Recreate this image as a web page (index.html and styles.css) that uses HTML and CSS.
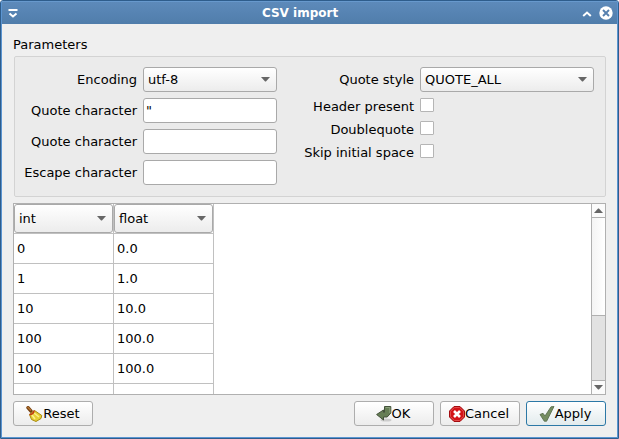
FILE: index.html
```html
<!DOCTYPE html>
<html lang="en">
<head>
<meta charset="utf-8">
<title>CSV import</title>
<link rel="stylesheet" href="styles.css">
</head>
<body>
<div class="window">
  <header class="titlebar">
    <svg class="menu-icon" width="10" height="10" viewBox="0 0 10 10"><path d="M.5 2h9" stroke="#fff" stroke-width="2"/><path d="M1.500 5.500 5 8.500l3.500-3" fill="none" stroke="#fff" stroke-width="2"/></svg>
    <h1>CSV import</h1>
    <svg class="shade-icon" width="10" height="6" viewBox="0 0 10 6"><path d="M1.200 5 5 1.500 8.800 5" fill="none" stroke="#fff" stroke-width="2"/></svg>
    <svg class="close-icon" width="14" height="14" viewBox="0 0 14 14"><circle cx="7" cy="7" r="6.700" fill="#fff"/><path d="m4 4 6 6m0-6-6 6" stroke="#5680af" stroke-width="1.900"/></svg>
  </header>
  <main class="content">
    <div class="group-title">Parameters</div>
    <section class="params">
      <div class="fields">
        <label>Encoding</label><div class="combo">utf-8<i class="arrow"></i></div>
        <label>Quote character</label><div class="input">"</div>
        <label>Quote character</label><div class="input"></div>
        <label>Escape character</label><div class="input"></div>
      </div>
      <div class="options">
        <label>Quote style</label><div class="combo">QUOTE_ALL<i class="arrow"></i></div>
        <label>Header present</label><span class="check"></span>
        <label>Doublequote</label><span class="check"></span>
        <label>Skip initial space</label><span class="check"></span>
      </div>
    </section>
    <section class="preview">
      <div class="grid">
        <div class="head"><div class="combo">int<i class="arrow"></i></div></div><div class="head"><div class="combo">float<i class="arrow"></i></div></div>
        <div class="cell">0</div><div class="cell">0.0</div>
        <div class="cell">1</div><div class="cell">1.0</div>
        <div class="cell">10</div><div class="cell">10.0</div>
        <div class="cell">100</div><div class="cell">100.0</div>
        <div class="cell">100</div><div class="cell">100.0</div>
        <div class="cell"></div><div class="cell"></div>
      </div>
      <div class="scrollbar">
        <div class="step"><i class="arrow up"></i></div>
        <div class="thumb"></div>
        <div class="track"></div>
        <div class="step"><i class="arrow"></i></div>
      </div>
    </section>
    <footer class="actions">
      <div class="button reset"><svg width="17" height="16" viewBox="0 0 17 16"><path d="m2 1.700 3 3.500" stroke="#76400f" stroke-width="3.400" stroke-linecap="round"/><path d="m1.500 1 3.500 3.500" stroke="#b87835" stroke-width="1.200"/><path d="M8.500 4.500 15.800 9.500 15 12.500l-5 3-4.500-2-2-5z" fill="#e6cf35" stroke="#a88a10"/><path d="m6 9 3 4m-1-6 5 4" stroke="#fff08a" stroke-width="1.500"/><path d="M3.500 8.500c2.500 0 4.200-1.500 4.500-4" fill="none" stroke="#c23b16" stroke-width="1.700"/></svg>Reset</div>
      <div class="spacer"></div>
      <div class="button"><svg width="16" height="16" viewBox="0 0 16 16"><ellipse cx="10" cy="14" rx="5.500" ry="1.500" fill="#ccc"/><path d="M8.500.5h6.300v6.500l-3.600 4H7.500v3L.6 8.500 7.500 4V6.500h1z" fill="#667e55" stroke="#43513a"/><path d="M9.500 1.500h4.300V7" fill="none" stroke="#8ba17c"/></svg>OK</div>
      <div class="button"><svg width="16" height="16" viewBox="0 0 16 16"><path d="M5 .5h6L15.500 5v6L11 15.500H5L.5 11V5z" fill="#d31318" stroke="#a30c10"/><path d="M5.400 1.500h5.200l3.900 3.900v5.200l-3.900 3.900H5.400l-3.900-3.900V5.400z" fill="none" stroke="#e04a4a"/><path d="m5 5 6 6m0-6-6 6" stroke="#fff" stroke-width="2.600"/></svg>Cancel</div>
      <div class="button default"><svg width="16" height="16" viewBox="0 0 16 16"><path d="m1 8.500 3-1.200 2 2.700L12 .8l3-.3-7.400 14.700H5.300z" fill="#758e61" stroke="#5c7050" stroke-width=".9" stroke-linejoin="round"/></svg>Apply</div>
    </footer>
  </main>
</div>
</body>
</html>
```
FILE: styles.css
```css
* { box-sizing: border-box; }
body {
  margin: 0;
  font: 13px/15px "DejaVu Sans", sans-serif;
  color: #000;
  background: #fff;
}
.window {
  width: 619px;
  height: 439px;
  border: 1px solid #2e5d8c;
  border-radius: 3px 3px 0 0;
  box-shadow: inset 0 0 0 1px #5b95d2;
  background: #efefef;
  overflow: hidden;
}
.titlebar {
  display: flex;
  align-items: center;
  height: 23px;
  padding: 1px 4px 0 6px;
  color: #fff;
  background: linear-gradient(#6799cd 0 1px, #5d8aba 1px, #507dab);
  border-inline: 1px solid #5b95d2;
}
.titlebar h1 {
  flex: 1;
  margin: 1px 0 0;
  font-size: 12px;
  text-align: center;
}
.menu-icon { margin-bottom: 1px; }
.shade-icon { margin: 1px 7px 0 0; }
.content { padding: 13px 12px 0; }
.group-title { height: 19px; }
.params {
  display: flex;
  gap: 26px;
  height: 141px;
  margin-left: 1px;
  padding: 10px 0 0 9px;
  border: 1px solid #d3d3d3;
  border-radius: 2px;
  background: #ebebeb;
}
.fields, .options {
  display: grid;
  column-gap: 6px;
  align-content: start;
}
.fields {
  grid-template-columns: 113px 134px;
  grid-auto-rows: 25px;
  row-gap: 6px;
}
.options {
  grid-template-columns: 111px 174px;
  grid-template-rows: 25px 17px 17px 17px;
  row-gap: 6px;
}
label {
  text-align: right;
  white-space: nowrap;
  align-self: center;
}
.combo {
  display: flex;
  align-items: center;
  justify-content: space-between;
  padding: 0 6px 0 4px;
  border: 1px solid #a9a9a9;
  border-radius: 3px;
  background: linear-gradient(#fff, #ececec);
}
.arrow {
  width: 9px;
  height: 5px;
  background: #666;
  clip-path: polygon(0 0, 100% 0, 55% 90%, 45% 90%);
}
.arrow.up { clip-path: polygon(0 100%, 100% 100%, 55% 10%, 45% 10%); }
.input {
  padding: 4px 2px;
  border: 1px solid #a9a9a9;
  border-radius: 3px;
  background: #fff;
}
.check {
  width: 14px;
  height: 14px;
  border: 1px solid #b5b5b5;
  border-radius: 1px;
  background: #fff;
}
.preview {
  display: flex;
  justify-content: space-between;
  height: 192px;
  margin-top: 6px;
  border: 1px solid #b0b0b0;
  background: #fff;
  overflow: hidden;
}
.grid {
  display: grid;
  grid-template-columns: 100px 100px;
  grid-auto-rows: 30px;
}
.cell, .head {
  border-right: 1px solid #c0c0c0;
  border-bottom: 1px solid #c0c0c0;
}
.cell { padding: 7px 3px; }
.head .combo { height: 29px; }
.scrollbar {
  display: flex;
  flex-direction: column;
  width: 14px;
  border-left: 1px solid #b0b0b0;
}
.step {
  display: grid;
  place-items: center;
  height: 13px;
  background: #fbfbfb;
}
.thumb {
  height: 99px;
  border: solid #b0b0b0;
  border-width: 1px 0;
  background: linear-gradient(90deg, #f4f4f4, #fff);
}
.track {
  flex: 1;
  background: #e2e2e2;
  border-bottom: 1px solid #b0b0b0;
}
.actions {
  display: flex;
  gap: 6px;
  margin-top: 6px;
}
.spacer { flex: 1; }
.button {
  display: flex;
  align-items: center;
  justify-content: center;
  width: 80px;
  height: 25px;
  padding-right: 2px;
  border: 1px solid #adadad;
  border-radius: 3px;
  background: linear-gradient(#fff, #ececec);
}
.button.reset { padding-right: 0; }
.default {
  border-color: #2c78a6;
  background: linear-gradient(#fff, #e2ebed);
}
```
